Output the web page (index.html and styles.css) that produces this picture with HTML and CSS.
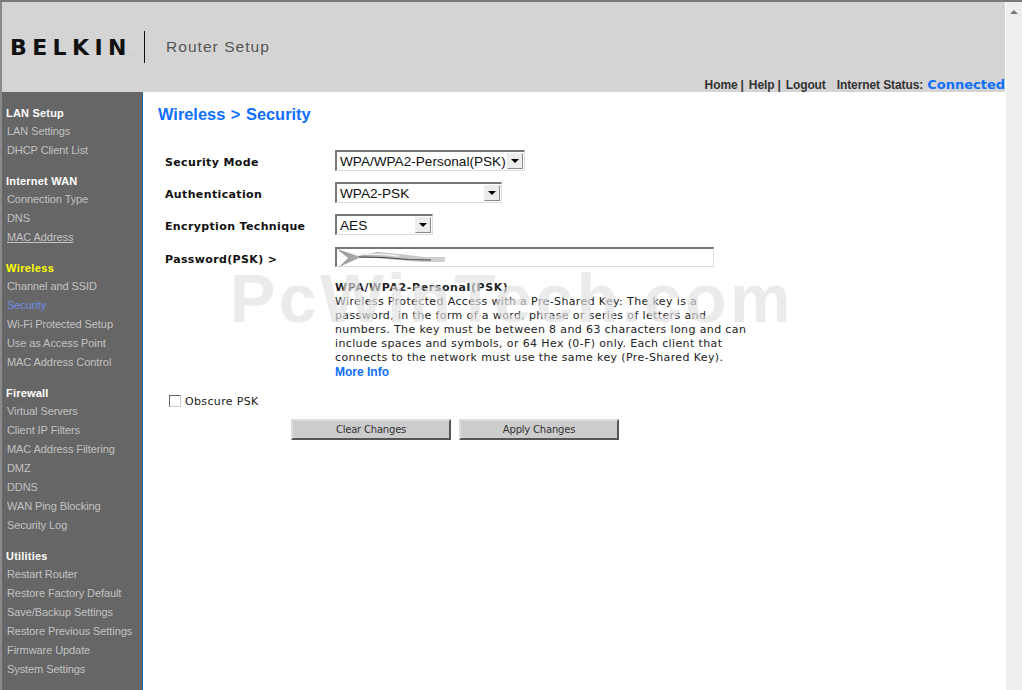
FILE: index.html
```html
<!DOCTYPE html>
<html lang="en">
<head>
<meta charset="utf-8">
<title>Router Setup</title>
<link rel="stylesheet" href="styles.css">
</head>
<body>
<div class="window">
  <div class="page">
    <header class="top">
      <div class="brand">
        <span class="logo">BELKIN<span class="logo-dot">.</span></span>
        <span class="app-name">Router Setup</span>
      </div>
      <nav class="topnav">
        <a>Home</a><span class="sep">|</span>
        <a>Help</a><span class="sep">|</span>
        <a class="logout">Logout</a>
        <span class="status-label">Internet Status:</span>
        <span class="status-value">Connected</span>
      </nav>
    </header>
    <div class="body">
      <aside class="side">
        <section class="group">
          <h3>LAN Setup</h3>
          <a>LAN Settings</a>
          <a>DHCP Client List</a>
        </section>
        <section class="group">
          <h3>Internet WAN</h3>
          <a>Connection Type</a>
          <a>DNS</a>
          <a class="under">MAC Address</a>
        </section>
        <section class="group">
          <h3 class="current-group">Wireless</h3>
          <a>Channel and SSID</a>
          <a class="current">Security</a>
          <a>Wi-Fi Protected Setup</a>
          <a>Use as Access Point</a>
          <a>MAC Address Control</a>
        </section>
        <section class="group">
          <h3>Firewall</h3>
          <a>Virtual Servers</a>
          <a>Client IP Filters</a>
          <a>MAC Address Filtering</a>
          <a>DMZ</a>
          <a>DDNS</a>
          <a>WAN Ping Blocking</a>
          <a>Security Log</a>
        </section>
        <section class="group">
          <h3>Utilities</h3>
          <a>Restart Router</a>
          <a>Restore Factory Default</a>
          <a>Save/Backup Settings</a>
          <a>Restore Previous Settings</a>
          <a>Firmware Update</a>
          <a>System Settings</a>
        </section>
      </aside>
      <main class="content">
        <h1>Wireless &gt; Security</h1>
        <div class="form">
          <label>Security Mode</label>
          <div class="select sel-mode"><span>WPA/WPA2-Personal(PSK)</span><i class="arrow"></i></div>
          <label>Authentication</label>
          <div class="select sel-auth"><span>WPA2-PSK</span><i class="arrow"></i></div>
          <label>Encryption Technique</label>
          <div class="select sel-enc"><span>AES</span><i class="arrow"></i></div>
          <label class="pass-label">Password(PSK) &gt;</label>
          <div class="pass">
            <svg class="smudge" width="112" height="18" viewBox="0 0 112 18">
              <defs>
                <linearGradient id="fade" x1="0" x2="1" y1="0" y2="0">
                  <stop offset="0" stop-color="#999"/>
                  <stop offset="0.5" stop-color="#c4c4c4"/>
                  <stop offset="1" stop-color="#d0d0d0"/>
                </linearGradient>
              </defs>
              <path d="M0 0 L21 7 L40 3 L62 5 L88 8 L108 8 L108 13 L84 13 L60 11 L40 9 L22 9 L2 18 L11 9 Z" fill="url(#fade)"/>
              <path d="M23 5 L48 5.5 L62 7" fill="none" stroke="#f4f4f4" stroke-width="1.5"/>
              <path d="M22 8 L46 8.5 L72 10.5 L94 11" fill="none" stroke="#444" stroke-width="1.1"/>
            </svg>
          </div>
        </div>
        <div class="desc">
          <strong>WPA/WPA2-Personal(PSK)</strong>
          <p>Wireless Protected Access with a Pre-Shared Key: The key is a password, in the form of a word, phrase or series of letters and numbers. The key must be between 8 and 63 characters long and can include spaces and symbols, or 64 Hex (0-F) only. Each client that connects to the network must use the same key (Pre-Shared Key).</p>
          <a class="more">More Info</a>
        </div>
        <div class="obscure"><i class="check"></i><span>Obscure PSK</span></div>
        <div class="actions">
          <button type="button">Clear Changes</button>
          <button type="button">Apply Changes</button>
        </div>
        <div class="watermark">PcWinTech.com</div>
      </main>
    </div>
  </div>
  <div class="scrollbar"><i class="scroll-up"></i></div>
</div>
</body>
</html>
```
FILE: styles.css
```css
* { box-sizing: border-box; }
html, body { margin: 0; height: 100%; overflow: hidden; background: #fff; }
.window {
  display: flex;
  width: 1022px;
  height: 690px;
  border-top: 2px solid #7a7a7a;
  font-family: "Liberation Sans", Arial, sans-serif;
}
.page {
  width: 1006px;
  display: flex;
  flex-direction: column;
  border-left: 2px solid #8a8a8a;
  border-right: 1px solid #fff;
}
.scrollbar {
  flex: 1;
  background: #efefef;
  display: flex;
  justify-content: center;
  padding-top: 8px;
}
.scroll-up {
  width: 0;
  height: 0;
  border-left: 4px solid transparent;
  border-right: 4px solid transparent;
  border-bottom: 4px solid #777;
}
.top {
  height: 90px;
  background: #d4d4d4;
  position: relative;
  display: flex;
  flex-direction: column;
  justify-content: flex-end;
}
.brand {
  position: absolute;
  left: 8px;
  top: 29px;
  display: flex;
  align-items: center;
  height: 32px;
}
.logo {
  width: 135px;
  height: 32px;
  border-right: 1px solid #111;
  font-family: "DejaVu Sans", Verdana, sans-serif;
  font-size: 22px;
  line-height: 34px;
  font-weight: bold;
  letter-spacing: 5.4px;
  color: #111;
  white-space: nowrap;
}
.logo-dot { font-size: 6px; letter-spacing: 0; color: #777; font-weight: normal; }
.app-name {
  margin-left: 21px;
  font-size: 15.5px;
  letter-spacing: 1.05px;
  color: #555;
}
.topnav {
  display: flex;
  justify-content: flex-end;
  align-items: baseline;
  height: 15px;
  font-size: 12px;
  font-weight: bold;
  line-height: 15px;
  color: #333;
  letter-spacing: -.1px;
}
.topnav .sep { margin: 0 5px 0 3px; }
.topnav .status-label { margin-left: 11px; }
.status-value {
  margin-left: 4px;
  font-family: "DejaVu Sans", Verdana, sans-serif;
  font-size: 13px;
  font-weight: bold;
  color: #0f6fff;
  letter-spacing: 0;
}
.body { flex: 1; display: flex; min-height: 0; }
.side {
  width: 141px;
  flex: none;
  background: #666;
  border-right: 1px solid #0a6aa8;
  padding-top: 13px;
}
.group { margin-bottom: 13px; }
.group h3 {
  margin: 0;
  padding-left: 4px;
  height: 17px;
  line-height: 17px;
  font-size: 11px;
  font-weight: bold;
  color: #fff;
  letter-spacing: .2px;
}
.group h3.current-group { color: #ff0; letter-spacing: .4px; }
.group a {
  display: block;
  padding-left: 5px;
  height: 19px;
  line-height: 19px;
  font-size: 11px;
  color: #c2c2c2;
  white-space: nowrap;
  letter-spacing: -.08px;
}
.group a.under { text-decoration: underline; }
.group a.current { color: #6f8fe8; }
.content {
  flex: 1;
  position: relative;
  background: #fff;
  padding: 12px 0 0 15px;
}
h1 {
  margin: 0;
  font-size: 16.4px;
  line-height: 20px;
  font-weight: bold;
  word-spacing: 1px;
  color: #0f6fff;
}
.form {
  margin: 26px 0 0 7px;
  display: grid;
  grid-template-columns: 170px auto;
  grid-auto-rows: 21px;
  row-gap: 11px;
  align-items: center;
  justify-items: start;
}
.form label {
  font-family: "DejaVu Sans", Verdana, sans-serif;
  font-size: 11px;
  font-weight: bold;
  letter-spacing: .36px;
  color: #111;
  padding-top: 4px;
}
.form .pass-label { padding-top: 6px; }
.select {
  height: 21px;
  display: flex;
  align-items: center;
  justify-content: space-between;
  border-top: 2px solid #777;
  border-left: 2px solid #777;
  border-right: 1px solid #ddd;
  border-bottom: 1px solid #ddd;
  padding: 0 1px 0 3px;
  font-size: 13.6px;
  color: #111;
  background: #fff;
  white-space: nowrap;
}
.sel-mode { width: 190px; }
.sel-auth { width: 167px; }
.sel-enc { width: 98px; }
.arrow {
  width: 16px;
  height: 16px;
  background: #ececec;
  border: 1px solid #888;
  border-top-color: #eee;
  border-left-color: #eee;
  position: relative;
  flex: none;
}
.arrow::after {
  content: "";
  position: absolute;
  left: 3px;
  top: 5px;
  border-left: 4px solid transparent;
  border-right: 4px solid transparent;
  border-top: 4px solid #000;
}
.pass {
  width: 379px;
  height: 20px;
  margin-top: 1px;
  border-top: 2px solid #777;
  border-left: 2px solid #777;
  border-right: 1px solid #ddd;
  border-bottom: 1px solid #ddd;
  background: #fff;
  line-height: 0;
}
.desc {
  margin: 14px 0 0 177px;
  width: 415px;
  font-family: "DejaVu Sans", Verdana, sans-serif;
  font-size: 11px;
  line-height: 14px;
  letter-spacing: .37px;
  color: #222;
}
.desc strong { display: block; color: #222; letter-spacing: .6px; }
.desc p { margin: 0; }
.desc .more {
  display: block;
  font-family: "Liberation Sans", Arial, sans-serif;
  font-size: 12px;
  font-weight: bold;
  letter-spacing: 0;
  color: #0f6fff;
}
.obscure {
  margin: 15px 0 0 11px;
  display: flex;
  align-items: center;
  height: 14px;
  font-family: "DejaVu Sans", Verdana, sans-serif;
  font-size: 11px;
  letter-spacing: .35px;
  color: #222;
}
.check {
  width: 12px;
  height: 12px;
  border-top: 1px solid #666;
  border-left: 1px solid #666;
  border-right: 1px solid #ccc;
  border-bottom: 1px solid #ccc;
  margin-right: 4px;
  background: #fff;
}
.actions {
  margin: 11px 0 0 133px;
  display: flex;
  gap: 8px;
}
.actions button {
  width: 160px;
  height: 21px;
  padding: 0;
  background: #ccc;
  border-style: solid;
  border-width: 2px;
  border-color: #ddd #555 #555 #ddd;
  font-family: "DejaVu Sans", Verdana, sans-serif;
  font-size: 10px;
  letter-spacing: -.2px;
  color: #333;
}
.watermark {
  position: absolute;
  left: 87px;
  top: 172px;
  pointer-events: none;
  font-family: "Liberation Sans", Arial, sans-serif;
  font-size: 68px;
  line-height: 68px;
  font-weight: bold;
  white-space: nowrap;
  color: rgba(225, 225, 225, .65);
  letter-spacing: 3.4px;
}
```
